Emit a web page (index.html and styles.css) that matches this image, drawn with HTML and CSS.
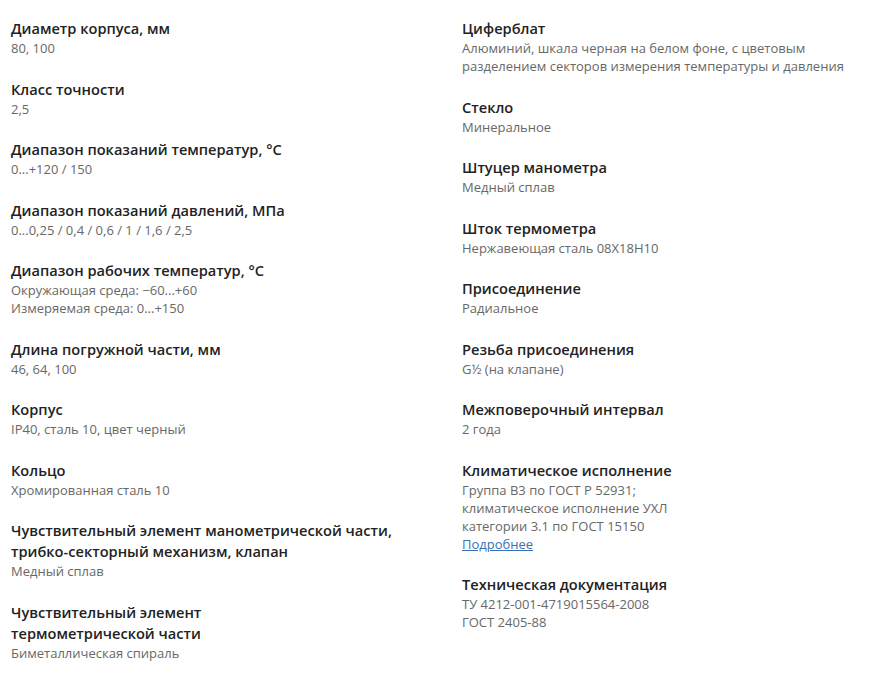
FILE: index.html
```html
<!DOCTYPE html>
<html lang="ru">
<head>
    <meta charset="UTF-8">
    <meta name="viewport" content="width=device-width, initial-scale=1.0">
    <title>Характеристики</title>
    <link rel="stylesheet" href="styles.css">
</head>
<body>

<div class="specs">
    <!-- левая колонка -->
    <div class="specs-col">
        <div class="spec">
            <div class="spec-title">Диаметр корпуса, мм</div>
            <div class="spec-value">80, 100</div>
        </div>
        <div class="spec">
            <div class="spec-title">Класс точности</div>
            <div class="spec-value">2,5</div>
        </div>
        <div class="spec">
            <div class="spec-title">Диапазон показаний температур, °С</div>
            <div class="spec-value">0...+120 / 150</div>
        </div>
        <div class="spec">
            <div class="spec-title">Диапазон показаний давлений, МПа</div>
            <div class="spec-value">0...0,25 / 0,4 / 0,6 / 1 / 1,6 / 2,5</div>
        </div>
        <div class="spec">
            <div class="spec-title">Диапазон рабочих температур, °С</div>
            <div class="spec-value">Окружающая среда: −60...+60<br>Измеряемая среда: 0...+150</div>
        </div>
        <div class="spec">
            <div class="spec-title">Длина погружной части, мм</div>
            <div class="spec-value">46, 64, 100</div>
        </div>
        <div class="spec">
            <div class="spec-title">Корпус</div>
            <div class="spec-value">IP40, сталь 10, цвет черный</div>
        </div>
        <div class="spec">
            <div class="spec-title">Кольцо</div>
            <div class="spec-value">Хромированная сталь 10</div>
        </div>
        <div class="spec">
            <div class="spec-title">Чувствительный элемент манометрической части,<br>трибко-секторный механизм, клапан</div>
            <div class="spec-value">Медный сплав</div>
        </div>
        <div class="spec">
            <div class="spec-title">Чувствительный элемент<br>термометрической части</div>
            <div class="spec-value">Биметаллическая спираль</div>
        </div>
    </div>

    <!-- правая колонка -->
    <div class="specs-col">
        <div class="spec">
            <div class="spec-title">Циферблат</div>
            <div class="spec-value">Алюминий, шкала черная на белом фоне, с цветовым<br>разделением секторов измерения температуры и давления</div>
        </div>
        <div class="spec">
            <div class="spec-title">Стекло</div>
            <div class="spec-value">Минеральное</div>
        </div>
        <div class="spec">
            <div class="spec-title">Штуцер манометра</div>
            <div class="spec-value">Медный сплав</div>
        </div>
        <div class="spec">
            <div class="spec-title">Шток термометра</div>
            <div class="spec-value">Нержавеющая сталь 08Х18Н10</div>
        </div>
        <div class="spec">
            <div class="spec-title">Присоединение</div>
            <div class="spec-value">Радиальное</div>
        </div>
        <div class="spec">
            <div class="spec-title">Резьба присоединения</div>
            <div class="spec-value">G½ (на клапане)</div>
        </div>
        <div class="spec">
            <div class="spec-title">Межповерочный интервал</div>
            <div class="spec-value">2 года</div>
        </div>
        <div class="spec">
            <div class="spec-title">Климатическое исполнение</div>
            <div class="spec-value">Группа В3 по ГОСТ Р 52931;<br>климатическое исполнение УХЛ<br>категории 3.1 по ГОСТ 15150<br><a href="#" class="spec-link">Подробнее</a></div>
        </div>
        <div class="spec">
            <div class="spec-title">Техническая документация</div>
            <div class="spec-value">ТУ 4212-001-4719015564-2008<br>ГОСТ 2405-88</div>
        </div>
    </div>
</div>

</body>
</html>
```

FILE: styles.css
```css
body {
    margin: 0;
    background-color: #fff;
    font-family: "Open Sans", "Liberation Sans", sans-serif;
}
.specs {
    display: grid;
    grid-template-columns: 451px 1fr;
    padding: 18px 0 0 11px;
}
.specs-col {
    display: flex;
    flex-direction: column;
    gap: 21.5px;
}
.spec-title {
    font-size: 14.6px;
    line-height: 21px;
    font-weight: 600;
    color: #222;
}
.spec-value {
    font-size: 13px;
    line-height: 18px;
    color: #686868;
}
.spec-link {
    color: #3b6fb6;
    text-decoration: underline;
}
```
